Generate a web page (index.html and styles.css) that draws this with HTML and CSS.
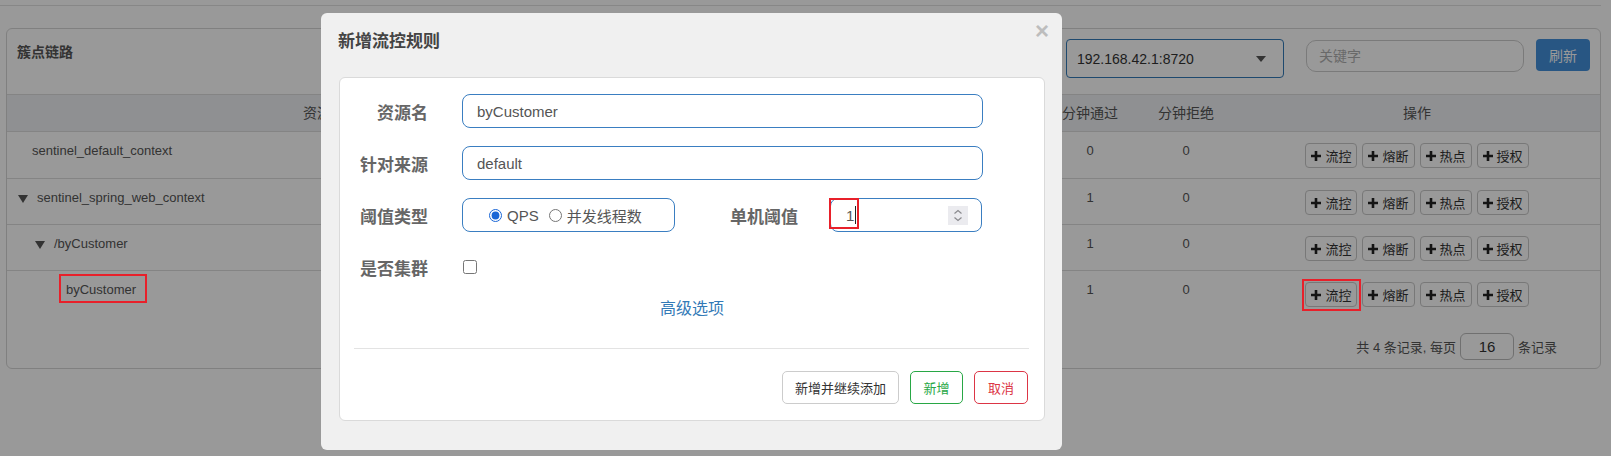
FILE: index.html
```html
<!DOCTYPE html>
<html lang="zh-CN">
<head>
<meta charset="utf-8">
<title>簇点链路</title>
<link rel="stylesheet" href="styles.css">
</head>
<body>
<div class="page">
  <div class="topbar"></div>
  <div class="card">
    <div class="card-head">
      <div class="card-title">簇点链路</div>
      <div class="tools">
        <div class="select">192.168.42.1:8720<span class="caret"></span></div>
        <div class="search">关键字</div>
        <button class="btn-refresh">刷新</button>
      </div>
    </div>
    <div class="table">
      <div class="row head">
        <div class="c c-name">资源名</div>
        <div class="c">通过QPS</div>
        <div class="c">拒绝QPS</div>
        <div class="c">并发数</div>
        <div class="c">平均RT</div>
        <div class="c">分钟通过</div>
        <div class="c">分钟拒绝</div>
        <div class="c">操作</div>
      </div>
      <div class="row">
        <div class="c c-name lv0">sentinel_default_context</div>
        <div class="c">0</div><div class="c">0</div><div class="c">0</div><div class="c">0</div>
        <div class="c">0</div>
        <div class="c">0</div>
        <div class="c ops">
          <button class="op"><svg viewBox="0 0 10 10"><path d="M3.7 0h2.6v3.7H10v2.6H6.3V10H3.7V6.3H0V3.7h3.7z"/></svg>流控</button>
          <button class="op"><svg viewBox="0 0 10 10"><path d="M3.7 0h2.6v3.7H10v2.6H6.3V10H3.7V6.3H0V3.7h3.7z"/></svg>熔断</button>
          <button class="op"><svg viewBox="0 0 10 10"><path d="M3.7 0h2.6v3.7H10v2.6H6.3V10H3.7V6.3H0V3.7h3.7z"/></svg>热点</button>
          <button class="op"><svg viewBox="0 0 10 10"><path d="M3.7 0h2.6v3.7H10v2.6H6.3V10H3.7V6.3H0V3.7h3.7z"/></svg>授权</button>
        </div>
      </div>
      <div class="row">
        <div class="c c-name lv1"><span class="tri"></span>sentinel_spring_web_context</div>
        <div class="c">0</div><div class="c">0</div><div class="c">0</div><div class="c">0</div>
        <div class="c">1</div>
        <div class="c">0</div>
        <div class="c ops">
          <button class="op"><svg viewBox="0 0 10 10"><path d="M3.7 0h2.6v3.7H10v2.6H6.3V10H3.7V6.3H0V3.7h3.7z"/></svg>流控</button>
          <button class="op"><svg viewBox="0 0 10 10"><path d="M3.7 0h2.6v3.7H10v2.6H6.3V10H3.7V6.3H0V3.7h3.7z"/></svg>熔断</button>
          <button class="op"><svg viewBox="0 0 10 10"><path d="M3.7 0h2.6v3.7H10v2.6H6.3V10H3.7V6.3H0V3.7h3.7z"/></svg>热点</button>
          <button class="op"><svg viewBox="0 0 10 10"><path d="M3.7 0h2.6v3.7H10v2.6H6.3V10H3.7V6.3H0V3.7h3.7z"/></svg>授权</button>
        </div>
      </div>
      <div class="row">
        <div class="c c-name lv2"><span class="tri"></span>/byCustomer</div>
        <div class="c">0</div><div class="c">0</div><div class="c">0</div><div class="c">0</div>
        <div class="c">1</div>
        <div class="c">0</div>
        <div class="c ops">
          <button class="op"><svg viewBox="0 0 10 10"><path d="M3.7 0h2.6v3.7H10v2.6H6.3V10H3.7V6.3H0V3.7h3.7z"/></svg>流控</button>
          <button class="op"><svg viewBox="0 0 10 10"><path d="M3.7 0h2.6v3.7H10v2.6H6.3V10H3.7V6.3H0V3.7h3.7z"/></svg>熔断</button>
          <button class="op"><svg viewBox="0 0 10 10"><path d="M3.7 0h2.6v3.7H10v2.6H6.3V10H3.7V6.3H0V3.7h3.7z"/></svg>热点</button>
          <button class="op"><svg viewBox="0 0 10 10"><path d="M3.7 0h2.6v3.7H10v2.6H6.3V10H3.7V6.3H0V3.7h3.7z"/></svg>授权</button>
        </div>
      </div>
      <div class="row">
        <div class="c c-name lv3">byCustomer</div>
        <div class="c">0</div><div class="c">0</div><div class="c">0</div><div class="c">0</div>
        <div class="c">1</div>
        <div class="c">0</div>
        <div class="c ops">
          <button class="op"><svg viewBox="0 0 10 10"><path d="M3.7 0h2.6v3.7H10v2.6H6.3V10H3.7V6.3H0V3.7h3.7z"/></svg>流控</button>
          <button class="op"><svg viewBox="0 0 10 10"><path d="M3.7 0h2.6v3.7H10v2.6H6.3V10H3.7V6.3H0V3.7h3.7z"/></svg>熔断</button>
          <button class="op"><svg viewBox="0 0 10 10"><path d="M3.7 0h2.6v3.7H10v2.6H6.3V10H3.7V6.3H0V3.7h3.7z"/></svg>热点</button>
          <button class="op"><svg viewBox="0 0 10 10"><path d="M3.7 0h2.6v3.7H10v2.6H6.3V10H3.7V6.3H0V3.7h3.7z"/></svg>授权</button>
        </div>
      </div>
    </div>
    <div class="pager">共 4 条记录, 每页<span class="pager-input">16</span>条记录</div>
  </div>
</div>

<div class="mask"></div>

<div class="modal">
  <div class="modal-head">
    <div class="modal-title">新增流控规则</div>
    <div class="modal-close">×</div>
  </div>
  <div class="panel">
    <div class="form">
      <div class="frow">
        <label class="flabel">资源名</label>
        <div class="input">byCustomer</div>
      </div>
      <div class="frow">
        <label class="flabel">针对来源</label>
        <div class="input">default</div>
      </div>
      <div class="frow">
        <label class="flabel">阈值类型</label>
        <div class="split">
          <div class="radio-box">
            <label class="radio"><input type="radio" name="grade" checked>QPS</label>
            <label class="radio"><input type="radio" name="grade">并发线程数</label>
          </div>
          <label class="flabel sub">单机阈值</label>
          <div class="input num"><span class="val">1<span class="cursor"></span></span>
            <svg class="spin" viewBox="0 0 20 19"><rect width="20" height="19" fill="#ebebef"/><path d="M6.5 7.5L10 4.5l3.5 3M6.5 11.5l3.5 3 3.5-3" fill="none" stroke="#8a8a8e" stroke-width="1.2"/></svg>
          </div>
        </div>
      </div>
      <div class="frow">
        <label class="flabel">是否集群</label>
        <div class="check"><input type="checkbox"></div>
      </div>
    </div>
    <div class="adv">高级选项</div>
    <div class="sep"></div>
    <div class="foot">
      <button class="fbtn">新增并继续添加</button>
      <button class="fbtn ok">新增</button>
      <button class="fbtn cancel">取消</button>
    </div>
  </div>
</div>

<div class="mark mark-name"></div>
<div class="mark mark-btn"></div>
<div class="mark mark-num"></div>
</body>
</html>
```

FILE: styles.css
```css
* { box-sizing: border-box; }
html, body { margin: 0; padding: 0; }
body {
  width: 1611px;
  height: 456px;
  overflow: hidden;
  background: #fff;
  font-family: "Liberation Sans", "Noto Sans CJK SC", sans-serif;
  color: #555;
  position: relative;
}
button { font-family: inherit; }

.topbar {
  width: 1601px;
  height: 6px;
  border-bottom: 1px solid #e2e2e2;
}

.card {
  margin: 22px 0 0 6px;
  width: 1595px;
  height: 341px;
  border: 1px solid #d6d6d6;
  border-radius: 6px;
  display: flex;
  flex-direction: column;
}
.card-head {
  height: 65px;
  display: flex;
  justify-content: space-between;
  align-items: flex-start;
  padding: 0 10px;
}
.card-title {
  padding-top: 13px;
  line-height: 20px;
  font-size: 14px;
  font-weight: bold;
  color: #555;
}
.tools {
  display: flex;
  align-items: flex-start;
  padding-top: 10px;
}
.select {
  width: 218px;
  height: 39px;
  border: 1px solid #337ab7;
  border-radius: 4px;
  padding: 0 17px 0 10px;
  display: flex;
  align-items: center;
  justify-content: space-between;
  font-size: 14px;
  color: #333;
}
.caret {
  width: 0; height: 0;
  border-left: 5px solid transparent;
  border-right: 5px solid transparent;
  border-top: 6px solid #555;
}
.search {
  margin: 1px 0 0 22px;
  width: 218px;
  height: 32px;
  border: 1px solid #ccc;
  border-radius: 10px;
  padding: 0 12px;
  line-height: 30px;
  font-size: 14px;
  color: #b0b0b0;
}
.btn-refresh {
  margin-left: 12px;
  width: 54px;
  height: 32px;
  border: 0;
  border-radius: 4px;
  background: #4390db;
  color: #fff;
  font-size: 14px;
  padding: 0;
}

.table { display: flex; flex-direction: column; }
.row {
  display: grid;
  grid-template-columns: 634px 100px 100px 100px 101px 96px 96px 366px;
  height: 46px;
  border-top: 1px solid #dcdcdc;
  font-size: 13px;
  color: #555;
}
.row.head {
  height: 38px;
  border-bottom: 1px solid #dcdcdc;
  background: #eef0f4;
  font-size: 14px;
  align-items: center;
}
.row.head + .row { border-top: 0; }
.row .c {
  text-align: center;
  padding-top: 9px;
  line-height: 20px;
  white-space: nowrap;
}
.row.head .c { padding-top: 0; }
.row .c-name { text-align: left; display: flex; align-items: flex-start; }
.row.head .c-name { justify-content: center; }
.lv0 { padding-left: 25px; }
.lv1 { padding-left: 11px; }
.lv2 { padding-left: 28px; }
.lv3 { padding-left: 59px; }
.tri {
  width: 0; height: 0;
  margin: 7px 9px 0 0;
  border-left: 5px solid transparent;
  border-right: 5px solid transparent;
  border-top: 8px solid #555;
}
.row .ops {
  display: flex;
  justify-content: center;
  gap: 5px;
  padding-top: 11px;
}
.op {
  height: 25px;
  padding: 0 5px;
  border: 1px solid #c8c8c8;
  border-radius: 4px;
  background: #fff;
  display: flex;
  align-items: center;
  gap: 4px;
  font-size: 13px;
  color: #333;
}
.op svg { width: 10px; height: 10px; fill: #222; }

.pager {
  display: flex;
  justify-content: flex-end;
  align-items: center;
  gap: 4px;
  padding: 17px 43px 0 0;
  font-size: 13px;
  color: #555;
}
.pager-input {
  width: 54px;
  height: 27px;
  border: 1px solid #bbb;
  border-radius: 6px;
  text-align: center;
  line-height: 25px;
  font-size: 15px;
  color: #333;
}

.mask {
  position: absolute;
  inset: 0;
  background: rgba(0, 0, 0, 0.4);
}

.modal {
  position: absolute;
  left: 321px;
  top: 13px;
  width: 741px;
  height: 437px;
  background: #f0f0f0;
  border-radius: 6px;
}
.modal-head {
  height: 64px;
  display: flex;
  justify-content: space-between;
  align-items: flex-start;
  padding: 0 13px 0 17px;
}
.modal-title {
  margin-top: 17px;
  line-height: 24px;
  font-size: 17px;
  font-weight: bold;
  color: #444;
}
.modal-close {
  margin-top: 6px;
  line-height: 24px;
  font-size: 24px;
  font-weight: bold;
  color: #bdbdbd;
}
.panel {
  margin: 0 17px 0 18px;
  height: 344px;
  background: #fff;
  border: 1px solid #dadada;
  border-radius: 6px;
}
.form {
  display: flex;
  flex-direction: column;
  gap: 18px;
  padding-top: 16px;
}
.frow {
  display: grid;
  grid-template-columns: 88px 521px;
  column-gap: 34px;
  align-items: center;
  height: 34px;
}
.flabel {
  text-align: right;
  font-size: 17px;
  font-weight: bold;
  color: #666;
  white-space: nowrap;
}
.input {
  height: 34px;
  border: 1px solid #3a7ec1;
  border-radius: 8px;
  padding: 0 14px;
  display: flex;
  align-items: center;
  font-size: 15px;
  color: #555;
}
.split {
  display: grid;
  grid-template-columns: 213px 123px 152px;
  column-gap: 0;
  align-items: center;
}
.split .sub { padding-right: 0; margin-right: 0; }
.split .num { margin-left: 32px; width: 152px; justify-content: space-between; padding-right: 13px; }
.radio-box {
  height: 34px;
  border: 1px solid #3a7ec1;
  border-radius: 8px;
  display: flex;
  align-items: center;
  padding-left: 26px;
  gap: 10px;
  font-size: 15px;
  color: #555;
}
.radio { display: flex; align-items: center; gap: 5px; }
.radio input {
  margin: 0;
  width: 13px;
  height: 13px;
  accent-color: #1a66d6;
}
.val { display: flex; align-items: center; padding-left: 1px; }
.cursor {
  display: inline-block;
  width: 1px;
  height: 18px;
  margin-left: 1px;
  background: #222;
}
.spin { width: 20px; height: 19px; }
.check { display: flex; align-items: center; }
.check input {
  margin: 0 0 0 1px;
  width: 14px;
  height: 14px;
}
.adv {
  margin-top: 14px;
  text-align: center;
  line-height: 22px;
  font-size: 16px;
  color: #337ab7;
}
.sep {
  margin: 28px 15px 0 14px;
  height: 1px;
  background: #e3e3e3;
}
.foot {
  display: flex;
  justify-content: flex-end;
  gap: 11px;
  margin-top: 22px;
  padding-right: 16px;
}
.fbtn {
  height: 33px;
  padding: 0 12px;
  border: 1px solid #ccc;
  border-radius: 5px;
  background: #fff;
  font-size: 13px;
  color: #333;
}
.fbtn.ok { color: #28a745; border-color: #28a745; width: 53px; padding: 0; }
.fbtn.cancel { color: #dc3545; border-color: #dc3545; width: 54px; padding: 0; }

.mark {
  position: absolute;
  border: 2px solid #e8202a;
}
.mark-name { left: 59px; top: 274px; width: 88px; height: 29px; }
.mark-btn { left: 1302px; top: 279px; width: 59px; height: 32px; }
.mark-num { left: 829px; top: 198px; width: 30px; height: 31px; }
```
